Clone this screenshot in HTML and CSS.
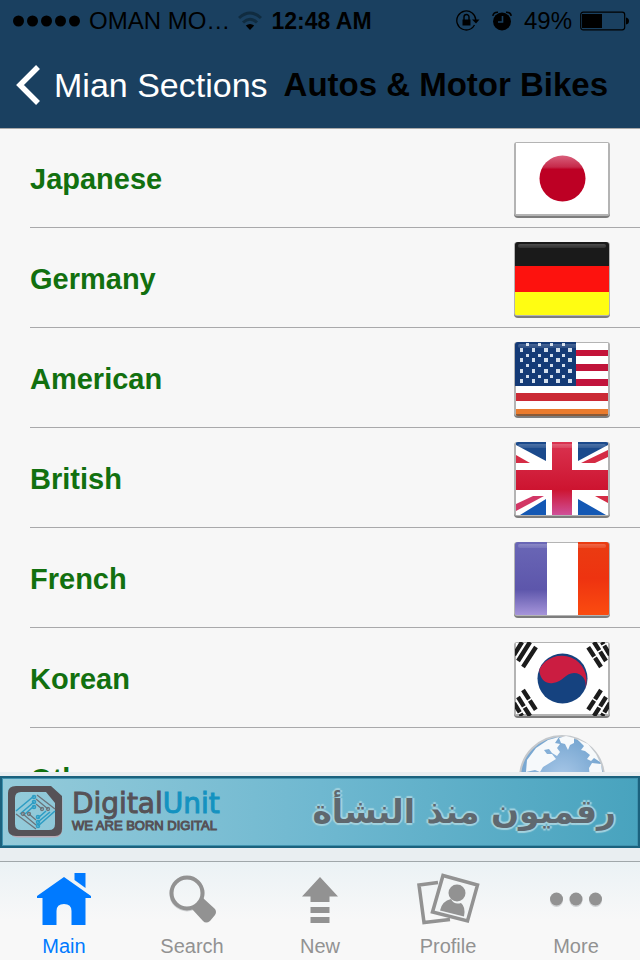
FILE: index.html
```html
<!DOCTYPE html>
<html lang="en">
<head>
    <meta charset="UTF-8">
    <meta name="viewport" content="width=device-width, initial-scale=1.0">
    <title>Autos &amp; Motor Bikes</title>
    <link rel="stylesheet" href="styles.css">
</head>
<body>
    <header class="header">
        <div class="status">
            <div class="status-left">
                <svg width="68" height="12" viewBox="0 0 68 12">
                    <circle cx="5.5" cy="6" r="5.5"/><circle cx="19.5" cy="6" r="5.5"/><circle cx="33.5" cy="6" r="5.5"/><circle cx="47.5" cy="6" r="5.5"/><circle cx="61.5" cy="6" r="5.5"/>
                </svg>
                <span>OMAN MO…</span>
                <svg width="24" height="20" viewBox="0 0 24 20" fill="none" stroke="#102c40" stroke-width="3">
                    <path d="M1 7 Q12 -3 23 7"/>
                    <path d="M5 11.5 Q12 5 19 11.5"/>
                    <path d="M12 19 L7.8 14.6 Q12 11.6 16.2 14.6 Z" fill="#000" stroke="none"/>
                </svg>
            </div>
            <span class="time">12:48 AM</span>
            <div class="status-right">
                <svg width="24" height="22" viewBox="0 0 24 22">
                    <path d="M19.8 10 A9.5 9.5 0 1 0 14.5 19" fill="none" stroke="#000" stroke-width="1.3"/>
                    <path d="M14.5 19 A9.5 9.5 0 0 0 18.5 15" fill="none" stroke="#000" stroke-width="1.3"/>
                    <path d="M16 9.5 H23.5 L20 13.5 Z"/>
                    <path d="M6.5 9.5 H14.5 V15.5 H6.5 Z"/>
                    <path d="M8 10 V7 a2.5 2.5 0 0 1 5 0 V10" fill="none" stroke="#000" stroke-width="1.4"/>
                </svg>
                <svg class="alarm" width="20" height="20" viewBox="0 0 20 20">
                    <circle cx="10" cy="10.5" r="9"/>
                    <path d="M0.8 4.8 Q1.5 1 6 1.2 M19.2 4.8 Q18.5 1 14 1.2" fill="none" stroke="#000" stroke-width="1.6"/>
                    <path d="M10.5 5 V11 H6" fill="none" stroke="#1a4060" stroke-width="1.6"/>
                </svg>
                <span>49%</span>
                <svg width="50" height="20" viewBox="0 0 50 20">
                    <rect x="0.7" y="1.2" width="44" height="17.6" rx="2.5" fill="none" stroke="#000" stroke-width="1.2"/>
                    <rect x="2" y="3" width="20" height="14"/>
                    <path d="M46 6.5 Q49 7 49 10 Q49 13 46 13.5 Z"/>
                </svg>
            </div>
        </div>
        <div class="navbar">
            <button type="button" class="back">
                <svg width="25" height="42" viewBox="0 0 25 42">
                    <path d="M22 3 L4 21 L22 39" fill="none" stroke="#fff" stroke-width="5.5"/>
                </svg>
                <span>Mian Sections</span>
            </button>
            <h1>Autos &amp; Motor Bikes</h1>
        </div>
    </header>

    <svg class="defs" width="0" height="0" aria-hidden="true">
        <defs>
            <clipPath id="card"><rect x="1" y="0" width="94" height="74" rx="3"/></clipPath>
            <linearGradient id="shine" x1="0" y1="0" x2="0" y2="1">
                <stop offset="0" stop-color="#fff" stop-opacity=".22"/>
                <stop offset="1" stop-color="#fff" stop-opacity=".1"/>
            </linearGradient>
            <linearGradient id="sun" x1="0" y1="0" x2="0" y2="1">
                <stop offset="0" stop-color="#d9607c"/><stop offset=".25" stop-color="#c62a4a"/><stop offset=".3" stop-color="#bd0024"/>
            </linearGradient>
            <linearGradient id="indigo" x1="0" y1="0" x2="0" y2="1">
                <stop offset="0" stop-color="#6a67b6"/><stop offset=".65" stop-color="#5d56ab"/><stop offset="1" stop-color="#a695da"/>
            </linearGradient>
            <linearGradient id="orange" x1="0" y1="0" x2="0" y2="1">
                <stop offset="0" stop-color="#ea3c12"/><stop offset=".5" stop-color="#ee3310"/><stop offset="1" stop-color="#fb4c10"/>
            </linearGradient>
            <linearGradient id="cross" x1="0" y1="0" x2="0" y2="73" gradientUnits="userSpaceOnUse">
                <stop offset="0" stop-color="#da3350"/><stop offset=".65" stop-color="#cd1430"/><stop offset="1" stop-color="#cf5099"/>
            </linearGradient>
            <radialGradient id="sea" cx=".5" cy=".5" r=".6">
                <stop offset="0" stop-color="#a9c8e8"/><stop offset="1" stop-color="#6c9fcc"/>
            </radialGradient>
            <g id="shadow"><rect x="0" y="1" width="96" height="75" rx="4" fill="#7d7d7d"/><rect x="0" y="0" width="96" height="74" rx="3" fill="#b4b4b4"/></g>
            <g id="gloss"><rect x="4" y="2" width="88" height="4" rx="2" fill="url(#shine)"/></g>
            <g id="stars5" fill="#d3deec"><path d="M6 0h3v4h-3z M18 0h3v4h-3z M30 0h4v4h-4z M42 0h4v4h-4z M54 0h4v4h-4z"/></g>
            <g id="stars4" fill="#d3deec"><path d="M12 0h3v3h-3z M24 0h3v3h-3z M36 0h3v3h-3z M48 0h3v3h-3z"/></g>
        </defs>
    </svg>

    <main class="list">
        <a class="row" href="#japanese">
            <span>Japanese</span>
            <svg width="96" height="76" viewBox="0 0 96 76">
                <use href="#shadow"/>
                <g clip-path="url(#card)">
                    <rect x="2" y="1" width="92" height="71" fill="#fff"/>
                    <circle cx="48.5" cy="36.5" r="23" fill="url(#sun)"/>
                </g>
            </svg>
        </a>
        <a class="row" href="#germany">
            <span>Germany</span>
            <svg width="96" height="76" viewBox="0 0 96 76">
                <use href="#shadow"/>
                <g clip-path="url(#card)">
                    <rect width="96" height="24" fill="#1a1a1a"/>
                    <rect y="24" width="96" height="26" fill="#fd120e"/>
                    <rect y="50" width="96" height="23" fill="#fffd12"/>
                    <use href="#gloss"/>
                </g>
            </svg>
        </a>
        <a class="row" href="#american">
            <span>American</span>
            <svg width="96" height="76" viewBox="0 0 96 76">
                <use href="#shadow"/>
                <g clip-path="url(#card)">
                    <rect x="2" y="1" width="92" height="72" fill="#fff"/>
                    <rect x="2" y="8" width="92" height="6" fill="#c41339"/>
                    <rect x="2" y="22" width="92" height="7" fill="#c0143a"/>
                    <rect x="2" y="37" width="92" height="7" fill="#c2143c"/>
                    <rect x="2" y="51" width="92" height="8" fill="#cb2a35"/>
                    <rect x="2" y="67" width="92" height="5" fill="#ea7b2d"/>
                    <rect x="2" y="72" width="92" height="2" fill="#8a5a37"/>
                    <rect x="1" y="0" width="61" height="44" fill="#143a76"/>
                    <use href="#stars4" y="1"/><use href="#stars5" y="6"/>
                    <use href="#stars4" y="12"/><use href="#stars5" y="16"/>
                    <use href="#stars4" y="22"/><use href="#stars5" y="27"/>
                    <use href="#stars4" y="33"/><use href="#stars5" y="37"/>
                    <use href="#gloss"/>
                </g>
            </svg>
        </a>
        <a class="row" href="#british">
            <span>British</span>
            <svg width="96" height="76" viewBox="0 0 96 76">
                <use href="#shadow"/>
                <g clip-path="url(#card)">
                    <rect x="2" y="0" width="92" height="73" fill="#fff"/>
                    <path d="M2 0 H32 V19 L2 3 Z M64 0 H94 V3 L64 19 Z" fill="#1b4a8c"/>
                    <path d="M6 73 L32 57 V73 Z M64 57 L92 73 H64 Z" fill="#1458b4"/>
                    <path d="M2 13 L16 21 H2 Z M67 21 L94 8 V15 L81 21 Z M81 54 H94 V61 Z" fill="#d52c45"/>
                    <path d="M2 62 L19 54 H30 L2 69 Z" fill="#d23766"/>
                    <path d="M38 0 H58 V73 H38 Z M2 28 H94 V48 H2 Z" fill="url(#cross)"/>
                    <use href="#gloss"/>
                </g>
            </svg>
        </a>
        <a class="row" href="#french">
            <span>French</span>
            <svg width="96" height="76" viewBox="0 0 96 76">
                <use href="#shadow"/>
                <g clip-path="url(#card)">
                    <rect x="1" width="32" height="73" fill="url(#indigo)"/>
                    <rect x="33" y="1" width="31" height="72" fill="#fff"/>
                    <rect x="64" width="31" height="73" fill="url(#orange)"/>
                    <use href="#gloss"/>
                </g>
            </svg>
        </a>
        <a class="row" href="#korean">
            <span>Korean</span>
            <svg width="96" height="76" viewBox="0 0 96 76">
                <use href="#shadow"/>
                <g clip-path="url(#card)">
                    <rect x="2" y="1" width="92" height="71" fill="#fff"/>
                    <g fill="none" stroke="#1c1c1c" stroke-width="4.4">
                        <path d="M0 13 L8 0 M4 19 L16 0 M9 25 L22 5"/>
                        <path d="M96 13 L88 0 M92 19 L80 0 M87 25 L74 5" stroke-dasharray="11 1.5"/>
                        <path d="M0 61 L8 74 M4 55 L16 74 M9 48 L22 68" stroke-dasharray="11 1.5"/>
                        <path d="M96 61 L88 74 M92 55 L80 74 M87 48 L74 68" stroke-dasharray="11 1.5"/>
                    </g>
                    <circle cx="48.5" cy="36.5" r="25" fill="#15427f"/>
                    <path d="M25.5 30 C27 39 33 42 39 41 C49 40 51 31 60 31 C68 31 73 38 71.5 46 A25 25 0 0 0 25.5 27 Z" fill="#cb1d41"/>
                </g>
            </svg>
        </a>
        <a class="row" href="#other">
            <span>Other</span>
            <svg width="96" height="92" viewBox="0 0 96 92">
                <circle cx="48" cy="44" r="42" fill="url(#sea)" stroke="#c4c8cc" stroke-width="2"/>
                <path d="M12 38 L13 26 L22 14 L34 6 L45 3 L41 9 L46 10 L43 14 L46 18 L43 22 L38 19 L35 15 L30 16 L33 20 L38 20 L42 25 L34 30 L29 33 L26 38 L21 36 Z" fill="#f6f9fb"/>
                <path d="M45 4 L52 2 L60 4 L60 9 L56 11 L54 16 L51 10 L47 9 Z M63 5 L74 10 L82 20 L86 28 L80 24 L77 27 L73 25 L76 21 L71 17 L67 16 L70 12 Z M78 29 L87 30 L89 44 L76 44 L75 34 Z" fill="#f6f9fb"/>
            </svg>
        </a>
    </main>

    <a class="ad" href="#digitalunit">
        <svg width="56" height="54" viewBox="0 0 56 54">
            <path d="M10 4 H42 L53 14 V43 Q53 51 46 51 H10 Q4 51 4 45 V9 Q4 4 10 4 Z" fill="none" stroke="#b9a9b3" stroke-width="3"/>
            <path fill-rule="evenodd" fill="#565257" d="M8 1 H43 L54 11 V44 Q54 51 47 51 H8 Q0 51 0 44 V8 Q0 1 8 1 Z M13 7 Q7 7 7 13 V39 Q7 45 13 45 H41 Q47 45 47 39 V18 L38 7 Z"/>
            <g fill="none" stroke="#2e9dc4" stroke-width="1.6">
                <path d="M8 26 L26 11 M12 29 L26 17 M17 29 L26 21 M30 41 L47 26 M30 37 L42 27 M30 33 L38 26"/>
                <circle cx="26" cy="12" r="1.5"/><circle cx="26" cy="17" r="1.5"/><circle cx="26" cy="22" r="1.5"/><circle cx="30" cy="41" r="1.5"/><circle cx="30" cy="37" r="1.5"/><circle cx="30" cy="32" r="1.5"/>
            </g>
            <g fill="none" stroke="#6b747b" stroke-width="1.3">
                <path d="M29 10 L47 24 M28 14 L40 24 M28 19 L34 24 M8 29 L28 44 M15 29 L28 40 M21 29 L28 35"/>
                <circle cx="40" cy="24" r="1.5"/><circle cx="34" cy="24" r="1.5"/><circle cx="15" cy="29" r="1.5"/><circle cx="21" cy="29" r="1.5"/>
            </g>
        </svg>
        <div class="brand">
            <span class="brand-name">Digital<span class="unit">Unit</span></span>
            <span class="tagline">WE ARE BORN DIGITAL</span>
        </div>
        <span class="slogan" lang="ar" dir="rtl">رقميون منذ النشأة</span>
    </a>

    <nav class="tabs">
        <a class="tab active" href="#main">
            <svg width="56" height="56" viewBox="0 0 56 56" fill="currentColor">
                <path d="M28 5 L55 24 V26 H49.5 V53 H35.5 V39 Q35.5 32 28 32 Q20.5 32 20.5 39 V53 H6.5 V26 H1 V24 Z"/>
                <path d="M38.5 1 H49.5 V16 L38.5 8 Z"/>
            </svg>
            <span>Main</span>
        </a>
        <a class="tab" href="#search">
            <svg width="56" height="56" viewBox="0 0 56 56">
                <circle cx="23" cy="22" r="16" fill="none" stroke="#cfd1d3" stroke-width="3"/>
                <circle cx="23" cy="21" r="15.5" fill="none" stroke="currentColor" stroke-width="4"/>
                <path d="M39 26 L51 37 Q53 40 51 43 L46 49 Q42 52 39 49 L28 37 Q35 34 39 26 Z" fill="currentColor"/>
            </svg>
            <span>Search</span>
        </a>
        <a class="tab" href="#new">
            <svg width="56" height="56" viewBox="0 0 56 56" fill="currentColor">
                <path d="M28 5 L46 24.5 H37.5 V30 H18.5 V24.5 H10 Z"/>
                <rect x="18.5" y="35" width="19" height="6"/>
                <rect x="18.5" y="45" width="19" height="6"/>
            </svg>
            <span>New</span>
        </a>
        <a class="tab" href="#profile">
            <svg width="64" height="56" viewBox="0 0 64 56">
                <path d="M22 10.5 L3 13 L8 50.5 L34 47.5" fill="none" stroke="currentColor" stroke-width="3.5"/>
                <path d="M27 3.5 L61.5 13 L51.5 49 L16.5 40 Z" fill="#f2f5f6" stroke="currentColor" stroke-width="3.5"/>
                <path d="M24 38.5 Q26 29 35 27 Q38 33 45 31 Q50 35 48 44.5 Z" fill="currentColor"/>
                <circle cx="41" cy="21" r="8.5" fill="currentColor"/>
            </svg>
            <span>Profile</span>
        </a>
        <a class="tab" href="#more">
            <svg width="56" height="56" viewBox="0 0 56 56">
                <g fill="#cfd1d3"><circle cx="8.5" cy="28.5" r="6.5"/><circle cx="28" cy="28.5" r="6.5"/><circle cx="47.5" cy="28.5" r="6.5"/></g>
                <g fill="currentColor"><circle cx="8.5" cy="27" r="6.5"/><circle cx="28" cy="27" r="6.5"/><circle cx="47.5" cy="27" r="6.5"/></g>
            </svg>
            <span>More</span>
        </a>
    </nav>
</body>
</html>
```

FILE: styles.css
```css
* {
    box-sizing: border-box;
}
body {
    display: flex;
    flex-direction: column;
    height: 100vh;
    margin: 0;
    font-family: "Liberation Sans", Arial, sans-serif;
    background-color: #e9eef1;
}
svg {
    display: block;
    flex-shrink: 0;
}
a {
    color: inherit;
    text-decoration: none;
}
.defs {
    position: absolute;
}

/* status bar and title */
.header {
    position: relative;
    background-color: #1a4060;
    box-shadow: 0 1px 0 #a9a9a9;
    color: #000;
}
.status {
    display: grid;
    grid-template-columns: 1fr auto 1fr;
    align-items: center;
    height: 40px;
    padding: 2px 10px 0 13px;
    font-size: 24px;
    white-space: nowrap;
}
.status-left, .status-right {
    display: flex;
    align-items: center;
    gap: 8px;
}
.status-right {
    justify-content: flex-end;
}
.alarm {
    margin: 0 4px;
}
.time {
    font-size: 23px;
    font-weight: bold;
}
.navbar {
    display: flex;
    align-items: center;
    gap: 16px;
    height: 88px;
    padding: 2px 16px 0;
    white-space: nowrap;
}
.back {
    display: flex;
    align-items: center;
    gap: 13px;
    padding: 0;
    border: none;
    background: none;
    color: #fff;
    font-family: inherit;
    font-size: 34px;
    cursor: pointer;
}
h1 {
    margin: 0;
    font-size: 33px;
}

/* sections */
.list {
    flex: 1;
    min-height: 0;
    overflow: hidden;
    background-color: #f7f7f7;
}
.row {
    display: flex;
    align-items: center;
    justify-content: space-between;
    height: 100px;
    margin-left: 30px;
    padding: 4px 30px 0 0;
    border-bottom: 1px solid #a9a9ab;
    color: #12700f;
    font-size: 29px;
    font-weight: bold;
}

/* banner */
.ad {
    display: flex;
    align-items: center;
    height: 72px;
    margin: 4px 0 13px;
    padding: 0 22px 0 6px;
    border: 2px solid #1b627e;
    box-shadow: inset 0 0 0 1px #4093af;
    background: linear-gradient(to right, #95cbda, #6fb8d0 50%, #48a3be);
    color: #565257;
    white-space: nowrap;
}
.brand {
    display: flex;
    flex-direction: column;
    margin-left: 8px;
}
.brand-name {
    font-family: "DejaVu Sans", sans-serif;
    font-size: 28px;
    line-height: 28px;
    -webkit-text-stroke: 1px;
}
.unit {
    color: #1492c0;
}
.tagline {
    font-size: 13px;
    line-height: 16px;
    -webkit-text-stroke: 1px;
}
.slogan {
    margin-left: auto;
    font-family: "DejaVu Sans", sans-serif;
    font-size: 33px;
    font-weight: bold;
    line-height: 60px;
    color: #5f686f;
    text-shadow: 2px 0 1px #a5d3df, -2px 0 1px #a5d3df, 0 2px 1px #a5d3df, 0 -2px 1px #a5d3df;
}

/* tab bar */
.tabs {
    display: flex;
    height: 99px;
    border-top: 1px solid #a0a7aa;
    background: linear-gradient(#ebf2f5, #f8f8f8 60%);
}
.tab {
    display: flex;
    flex: 1;
    flex-direction: column;
    align-items: center;
    padding-top: 10px;
    gap: 6px;
    color: #929292;
    font-size: 20px;
    line-height: 24px;
}
.tab.active {
    color: #007aff;
}
```
